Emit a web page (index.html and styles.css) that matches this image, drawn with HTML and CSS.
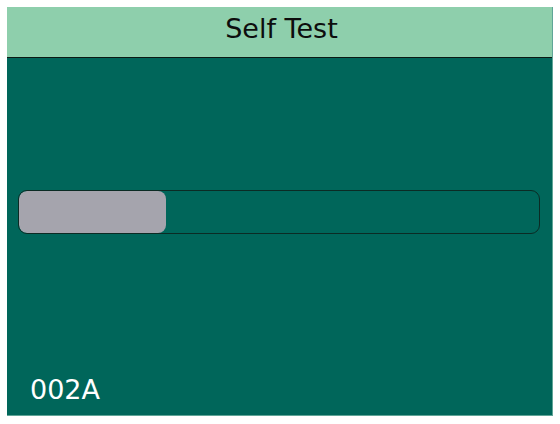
FILE: index.html
```html
<!DOCTYPE html>
<html>
<head>
<meta charset="utf-8">
<link rel="stylesheet" href="styles.css">
</head>
<body>
<div class="screen">
  <div class="header">Self Test</div>
  <div class="main">
    <div class="progress"><div class="fill" style="width: 147px"></div></div>
    <div class="code">002A</div>
  </div>
</div>
</body>
</html>
```
FILE: styles.css
```css
html, body { margin: 0; padding: 0; background: #ffffff; }
body { padding: 7px; }
.screen {
  width: 546px;
  height: 409px;
  display: flex;
  flex-direction: column;
  font-family: "DejaVu Sans", sans-serif;
  box-sizing: border-box;
  border-right: 1px solid #5fa597;
  border-bottom: 1px solid #5fa597;
}
.header {
  height: 51px;
  box-sizing: border-box;
  padding-bottom: 6px;
  padding-left: 4px;
  line-height: 44px;
  background: #8ecfac;
  color: #0d0d0d;
  font-size: 27px;
  text-align: center;
  border-bottom: 1px solid #0a1a14;
  flex: none;
}
.main {
  flex: 1;
  background: #00665a;
  display: flex;
  flex-direction: column;
  padding: 132px 0 10px 11px;
}
.progress {
  width: 522px;
  height: 44px;
  box-sizing: border-box;
  border: 1px solid #0b2b24;
  border-radius: 9px;
  overflow: hidden;
  display: flex;
}
.fill {
  height: 100%;
  background: #a5a4ad;
  border-radius: 8px;
}
.code {
  margin-top: auto;
  margin-left: 12px;
  color: #ffffff;
  font-size: 27px;
  line-height: 30px;
}
```
